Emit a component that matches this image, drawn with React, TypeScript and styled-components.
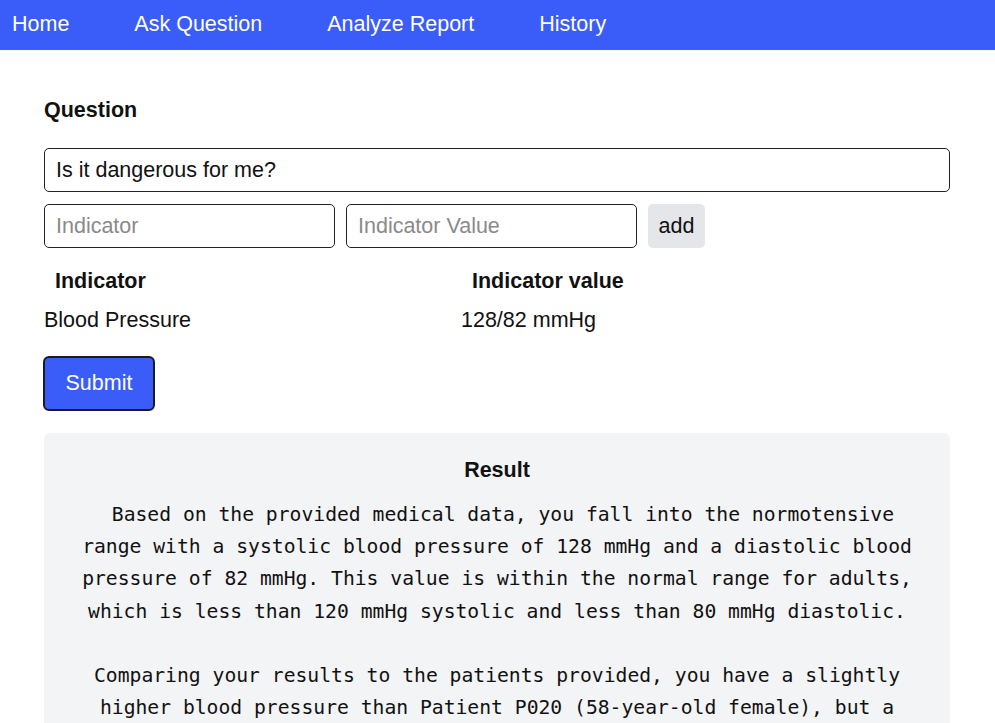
import React from "react";
import styled, { createGlobalStyle } from "styled-components";

const Global = createGlobalStyle`
  html, body { margin: 0; padding: 0; background: #fff; }
  body { font-family: "Liberation Sans", Arial, sans-serif; color: #111; overflow: hidden; }
  * { box-sizing: border-box; }
`;

const Nav = styled.nav`
  height: 50px;
  background: #3a5cf8;
  display: flex;
  align-items: center;
  gap: 65px;
  padding: 0 12px 1px;
`;

const NavLink = styled.a`
  color: #fff;
  font-size: 21.5px;
  text-decoration: none;
`;

const Main = styled.main`
  padding: 0 45px 0 44px;
  display: flex;
  flex-direction: column;
`;

const Label = styled.label`
  font-size: 21.5px;
  font-weight: bold;
  margin: 48px 0 26px;
  line-height: 24px;
`;

const Input = styled.input<{ $w?: string }>`
  height: 44px;
  width: ${(p) => p.$w ?? "100%"};
  border: 1px solid #222;
  border-radius: 5px;
  padding: 1px 11px 0;
  font-family: "Liberation Sans", Arial, sans-serif;
  font-size: 21.5px;
  color: #111;
  outline: none;
  &::placeholder { color: #8a8a8a; }
`;

const Row = styled.div`
  display: flex;
  align-items: center;
  gap: 11px;
  margin-top: 12px;
`;

const AddButton = styled.button`
  height: 44px;
  width: 57px;
  border: none;
  border-radius: 5px;
  background: #e5e6ea;
  font-family: "Liberation Sans", Arial, sans-serif;
  font-size: 21.5px;
  color: #111;
`;

const Table = styled.div`
  display: grid;
  grid-template-columns: 417px 1fr;
  margin-top: 21px;
  font-size: 21.5px;
  row-gap: 15px;
`;

const Th = styled.div`
  font-weight: bold;
  padding-left: 11px;
  line-height: 24px;
`;

const Td = styled.div`
  line-height: 24px;
`;

const Submit = styled.button`
  align-self: flex-start;
  margin-top: 24px;
  margin-left: -1px;
  width: 112px;
  height: 55px;
  background: #3a5cf8;
  color: #fff;
  border: 2px solid #1b1b1f;
  border-radius: 6px;
  font-family: "Liberation Sans", Arial, sans-serif;
  font-size: 21.5px;
`;

const Result = styled.section`
  margin-top: 22px;
  background: #f3f4f6;
  border-radius: 6px;
  padding: 25px 32px 40px;
  text-align: center;
`;

const ResultTitle = styled.h3`
  margin: 0 0 17px;
  font-size: 21.5px;
  font-weight: bold;
  line-height: 24px;
`;

const ResultText = styled.pre`
  margin: 0;
  white-space: pre-wrap;
  font-family: "DejaVu Sans Mono", "Liberation Mono", monospace;
  font-size: 19.7px;
  line-height: 32.2px;
  letter-spacing: 0;
  color: #111;
`;

const text = ` Based on the provided medical data, you fall into the normotensive range with a systolic blood pressure of 128 mmHg and a diastolic blood pressure of 82 mmHg. This value is within the normal range for adults, which is less than 120 mmHg systolic and less than 80 mmHg diastolic.

Comparing your results to the patients provided, you have a slightly higher blood pressure than Patient P020 (58-year-old female), but a lower blood pressure than most of the other patients in the list.`;

export default function App() {
  return (
    <>
      <Global />
      <Nav>
        <NavLink href="#">Home</NavLink>
        <NavLink href="#">Ask Question</NavLink>
        <NavLink href="#">Analyze Report</NavLink>
        <NavLink href="#">History</NavLink>
      </Nav>
      <Main>
        <Label>Question</Label>
        <Input defaultValue="Is it dangerous for me?" />
        <Row>
          <Input $w="291px" placeholder="Indicator" />
          <Input $w="291px" placeholder="Indicator Value" />
          <AddButton>add</AddButton>
        </Row>
        <Table>
          <Th>Indicator</Th>
          <Th>Indicator value</Th>
          <Td>Blood Pressure</Td>
          <Td>128/82 mmHg</Td>
        </Table>
        <Submit>Submit</Submit>
        <Result>
          <ResultTitle>Result</ResultTitle>
          <ResultText>{text}</ResultText>
        </Result>
      </Main>
    </>
  );
}
